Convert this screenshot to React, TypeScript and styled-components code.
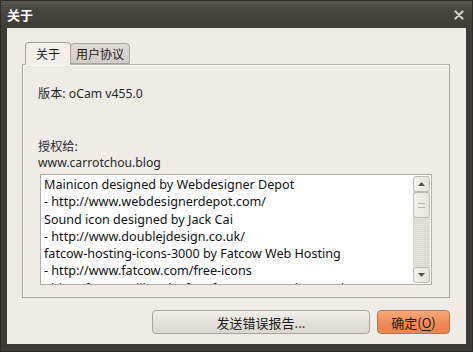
import React, {FC, ReactElement} from 'react';
import styled, {createGlobalStyle} from 'styled-components';

const GlobalStyle = createGlobalStyle`
html, body {
  margin: 0;
  padding: 0;
  width: 473px;
  height: 352px;
  overflow: hidden;
  background: #3c3b37;
}
`

const Frame = styled.div`
width: 473px;
height: 352px;
box-sizing: border-box;
display: flex;
flex-direction: column;
background: linear-gradient(180deg, #57564f 0px, #45443f 10px, #3c3b37 28px, #3c3b37 100%);
border: 1px solid #2c2b28;
font-family: "Noto Sans", "Noto Sans CJK SC", sans-serif;`

const TitleBar = styled.div`
height: 27px;
display: flex;
align-items: center;
justify-content: space-between;
padding: 0 8px 0 6px;
box-sizing: border-box;`

const Title = styled.span`
color: #ffffff;
font-family: "Noto Sans CJK SC", sans-serif;
font-size: 13px;
font-weight: 700;
line-height: 16px;`

const Client = styled.div`
flex: 1;
margin: 0 6px 7px 6px;
background: #efebe7;
display: flex;
flex-direction: column;
padding: 14px 16px 0 15px;
box-sizing: border-box;`

const TabRow = styled.div`
display: flex;
padding-left: 3px;
height: 22px;
align-items: flex-end;
position: relative;
z-index: 1;`

const Tab = styled.div<{ $active?: boolean }>`
height: ${p => (p.$active ? '23px' : '21px')};
padding: 0 ${p => (p.$active ? '10px' : '5px')};
box-sizing: border-box;
display: flex;
align-items: center;
justify-content: center;
border: 1px solid #a9a59e;
border-bottom: ${p => (p.$active ? '1px solid #efebe7' : '1px solid #a9a59e')};
border-radius: 4px 4px 0 0;
margin-bottom: ${p => (p.$active ? '-1px' : '0')};
background: ${p => (p.$active ? '#f3f0ec' : 'linear-gradient(180deg, #dedad5, #d2cec9)')};
font-family: "Noto Sans CJK SC", sans-serif;
font-size: 12px;
color: #1a1a1a;
margin-right: -1px;`

const Panel = styled.div`
width: 428px;
height: 234px;
box-sizing: border-box;
border: 1px solid #aaa69f;
border-top-color: #b8b4ae;
box-shadow: inset 1px 1px 0 #faf8f6;
padding: 21px 16px 0 15px;
display: flex;
flex-direction: column;`

const Line = styled.div<{ $gap?: number }>`
font-size: 12.2px;
line-height: 16px;
color: #2a2a2a;
margin-top: ${p => p.$gap || 0}px;`

const TextBox = styled.div`
margin: 3px 0 0 2px;
width: 392px;
height: 111px;
box-sizing: border-box;
border: 1px solid #b2aea8;
background: #ffffff;
display: flex;`

const TextArea = styled.div`
flex: 1;
overflow: hidden;
padding: 1px 0 0 3px;
font-size: 12.6px;
line-height: 17.3px;
color: #111;
white-space: nowrap;`

const ScrollBar = styled.div`
width: 17px;
margin: 1px 1px 1px 0;
display: flex;
flex-direction: column;
background: repeating-linear-gradient(180deg, #e4e1dd 0, #e4e1dd 1px, #dcd9d4 1px, #dcd9d4 2px);
border-radius: 3px;`

const ScrollButton = styled.div<{ $height: number }>`
height: ${p => p.$height}px;
box-sizing: border-box;
border: 1px solid #bebab4;
border-radius: 3px;
background: linear-gradient(90deg, #f4f2f0, #e6e3df);
display: flex;
align-items: center;
justify-content: center;`

const Spacer = styled.div`
flex: 1;`

const Footer = styled.div`
display: flex;
justify-content: flex-end;
gap: 7px;
margin-top: 12px;`

const Button = styled.div<{ $primary?: boolean; $width: number }>`
width: ${p => p.$width}px;
height: 24px;
box-sizing: border-box;
border: 1px solid ${p => (p.$primary ? '#b8754c' : '#a7a39d')};
border-radius: 4px;
background: ${p => (p.$primary
  ? 'linear-gradient(180deg, #f7a877, #ee8a55 60%, #ec8550)'
  : 'linear-gradient(180deg, #f1efec, #e2deda 60%, #dbd7d2)')};
display: flex;
align-items: center;
justify-content: center;
font-family: "Noto Sans CJK SC", sans-serif;
font-size: 13px;
color: #1c1c1c;`

const U = styled.span`
text-decoration: underline;
text-underline-offset: 2px;`

const lines = [
  'Mainicon designed by Webdesigner Depot',
  '- http://www.webdesignerdepot.com/',
  'Sound icon designed by Jack Cai',
  '- http://www.doublejdesign.co.uk/',
  'fatcow-hosting-icons-3000 by Fatcow Web Hosting',
  '- http://www.fatcow.com/free-icons',
  'This software will make free for FI personal use only.',
]

const App: FC = (): ReactElement => {
  return (
    <Frame>
      <GlobalStyle />
      <TitleBar>
        <Title>关于</Title>
        <svg width="10" height="10" viewBox="0 0 10 10">
          <path d="M1.5 1.5 L8.5 8.5 M8.5 1.5 L1.5 8.5" stroke="#cfcbc4" strokeWidth="2.2" strokeLinecap="round" />
        </svg>
      </TitleBar>
      <Client>
        <TabRow>
          <Tab $active>关于</Tab>
          <Tab>用户协议</Tab>
        </TabRow>
        <Panel>
          <Line>版本: oCam v455.0</Line>
          <Line $gap={37}>授权给:</Line>
          <Line>www.carrotchou.blog</Line>
          <TextBox>
            <TextArea>
              {lines.map(l => <div key={l}>{l}</div>)}
            </TextArea>
            <ScrollBar>
              <ScrollButton $height={16}>
                <svg width="7" height="4" viewBox="0 0 7 4"><path d="M0 4 L3.5 0 L7 4 Z" fill="#55534f" /></svg>
              </ScrollButton>
              <ScrollButton $height={26}>
                <svg width="7" height="5" viewBox="0 0 7 5">
                  <path d="M0 0.5 H7 M0 4.5 H7" stroke="#b8b4ae" strokeWidth="1" />
                </svg>
              </ScrollButton>
              <Spacer />
              <ScrollButton $height={16}>
                <svg width="7" height="4" viewBox="0 0 7 4"><path d="M0 0 L3.5 4 L7 0 Z" fill="#55534f" /></svg>
              </ScrollButton>
            </ScrollBar>
          </TextBox>
        </Panel>
        <Footer>
          <Button $width={218}>发送错误报告...</Button>
          <Button $primary $width={73}>确定(<U>O</U>)</Button>
        </Footer>
      </Client>
    </Frame>
  )
}

export default App;
